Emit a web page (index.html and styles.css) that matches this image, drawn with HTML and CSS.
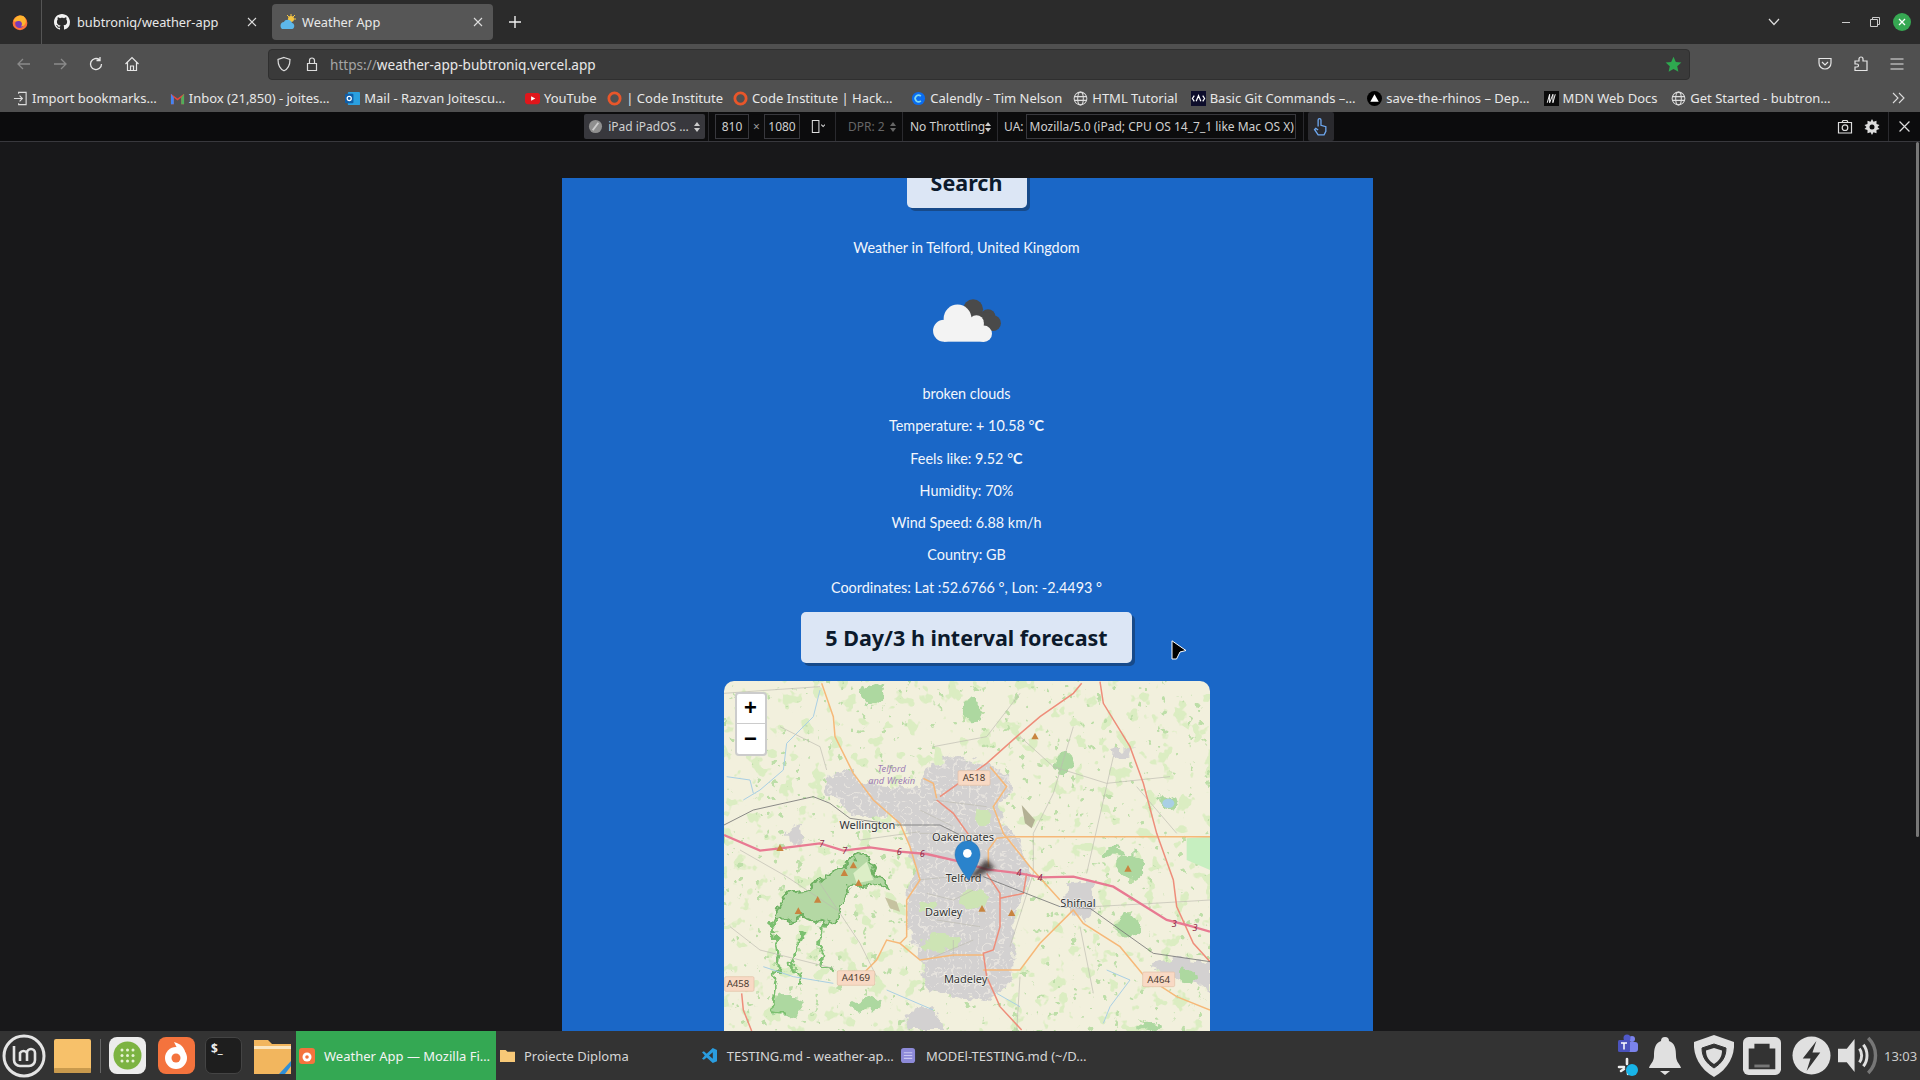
FILE: index.html
```html
<!DOCTYPE html>
<html lang="en">
<head>
    <meta charset="UTF-8">
    <title>Weather App</title>
    <link rel="stylesheet" href="styles.css">
</head>
<body>
    <div class="tabbar">
        <svg class="ff-logo" viewBox="0 0 20 20" width="16" height="17"><circle cx="10" cy="10.500" r="9.200" fill="#ff7139"/><circle cx="9.500" cy="11.500" r="5.500" fill="#7a3bb8"/><path d="M2 8C5 0 14 0 16 4 19 8 17 15 11 15 14 12 12 8 9 8 6 8 4 10 2 8z" fill="#ffb52e"/></svg>
        <div class="tab-sep"></div>
        <div class="tab">
            <svg viewBox="0 0 16 16" width="16" height="16"><path fill="#f2f2f2" d="M8 0C3.58 0 0 3.58 0 8c0 3.54 2.29 6.53 5.47 7.59.4.07.55-.17.55-.38 0-.19-.01-.82-.01-1.49-2.01.37-2.53-.49-2.69-.94-.09-.23-.48-.94-.82-1.13-.28-.15-.68-.52-.01-.53.63-.01 1.08.58 1.23.82.72 1.21 1.87.87 2.33.66.07-.52.28-.87.51-1.07-1.78-.2-3.64-.89-3.64-3.95 0-.87.31-1.59.82-2.15-.08-.2-.36-1.02.08-2.12 0 0 .67-.21 2.2.82.64-.18 1.32-.27 2-.27.68 0 1.36.09 2 .27 1.53-1.04 2.2-.82 2.2-.82.44 1.1.16 1.92.08 2.12.51.56.82 1.27.82 2.15 0 3.07-1.87 3.75-3.65 3.95.29.25.54.73.54 1.48 0 1.07-.01 1.93-.01 2.2 0 .21.15.46.55.38A8.013 8.013 0 0016 8c0-4.42-3.58-8-8-8z"/></svg>
            <span class="tab-title">bubtroniq/weather-app</span>
            <svg class="tab-close" viewBox="0 0 10 10" width="10" height="10"><path d="M1 1 9 9M9 1 1 9" stroke="#ddd" stroke-width="1.1"/></svg>
        </div>
        <div class="tab active">
            <svg viewBox="0 0 16 16" width="16" height="16"><g stroke="#f5c542" stroke-width="1"><path d="M11 0V3M16 5H13M7 1 9 3M15 1 13 3"/></g><circle cx="11" cy="5" r="3" fill="#f5c542"/><path d="M2 15C-1 12 1 8 4 8 5 5 11 5 12 9 15 9 15 15 12 15z" fill="#5db7ea"/></svg>
            <span class="tab-title">Weather App</span>
            <svg class="tab-close" viewBox="0 0 10 10" width="10" height="10"><path d="M1 1 9 9M9 1 1 9" stroke="#ddd" stroke-width="1.1"/></svg>
        </div>
        <svg class="new-tab" viewBox="0 0 12 12" width="12" height="12"><path d="M6 0V12M0 6H12" stroke="#f0f0f0" stroke-width="1.4"/></svg>
        <div class="spacer"></div>
        <svg class="all-tabs" viewBox="0 0 12 8" width="12" height="8"><path d="M1 1 6 6.5 11 1" stroke="#ddd" stroke-width="1.2" fill="none"/></svg>
        <div class="win-min"></div>
        <svg class="win-max" viewBox="0 0 10 10" width="10" height="10"><path d="M.5 2.5H7.5V9.5H.5zM2.5 2.5V.5H9.5V7.5H7.5" stroke="#ccc" fill="none"/></svg>
        <div class="win-close">
            <svg viewBox="0 0 8 8" width="8" height="8"><path d="M1 1 7 7M7 1 1 7" stroke="#fff" stroke-width="1.3"/></svg>
        </div>
    </div>

    <div class="navbar">
        <svg class="nav-icon back" viewBox="0 0 16 16" width="16" height="16"><path d="M14 8H2M7 3 2 8l5 5" stroke="#8a8a8a" stroke-width="1.3" fill="none"/></svg>
        <svg class="nav-icon" viewBox="0 0 16 16" width="16" height="16"><path d="M2 8H14M9 3l5 5-5 5" stroke="#8a8a8a" stroke-width="1.3" fill="none"/></svg>
        <svg class="nav-icon" viewBox="0 0 16 16" width="16" height="16"><path d="M13.5 8A5.5 5.5 0 1 1 11.5 3.8M12 1V4.5H8.5" stroke="#e6e6e6" stroke-width="1.3" fill="none"/></svg>
        <svg class="nav-icon" viewBox="0 0 16 16" width="16" height="16"><path d="M1.5 8 8 1.5 14.500 8M3.500 6.500V14.500H12.500V6.500M6.500 14.500V10H9.500V14.500" stroke="#e6e6e6" stroke-width="1.2" fill="none"/></svg>
        <div class="urlbar">
            <svg viewBox="0 0 16 16" width="16" height="16"><path d="M8 1.500 14 3.500C14 9 12 13 8 14.800 4 13 2 9 2 3.500z" stroke="#ddd" stroke-width="1.2" fill="none"/></svg>
            <svg viewBox="0 0 16 16" width="16" height="16"><path d="M3.500 7.500H12.500V14.500H3.500zM5.500 7.500V4.500A2.500 2.500 0 0 1 10.500 4.500V7.500" stroke="#ddd" stroke-width="1.2" fill="none"/></svg>
            <span class="url"><span class="url-dim">https://</span>weather-app-bubtroniq.vercel.app</span>
            <svg class="url-star" viewBox="0 0 16 16" width="17" height="17"><path d="M8 .8l2.200 4.800 5.200.6-3.900 3.500 1.100 5.200L8 12.200 3.400 14.900l1.100-5.200L.6 6.200l5.200-.6z" fill="#2ea84f"/></svg>
        </div>
        <svg class="nav-icon pocket" viewBox="0 0 16 16" width="16" height="16"><path d="M2 2.500H14V7A6 6 0 0 1 2 7zM5 6l3 3 3-3" stroke="#e6e6e6" stroke-width="1.2" fill="none"/></svg>
        <svg class="nav-icon" viewBox="0 0 16 16" width="16" height="16"><path d="M2 5H6V3A2 2 0 0 1 10 3V5H14V14.500H2V11H4A1.500 1.500 0 0 0 4 8H2z" stroke="#e6e6e6" stroke-width="1.2" fill="none"/></svg>
        <svg class="nav-icon nav-last" viewBox="0 0 16 16" width="16" height="16"><path d="M1.500 3H14.500M1.500 8H14.500M1.500 13H14.500" stroke="#e6e6e6" stroke-width="1.2"/></svg>
    </div>

    <div class="bookmarks">
        <div class="bm bm-import"><svg viewBox="0 0 16 16" width="15" height="15"><path d="M6 3V1.500H14V14.500H6V13M1 8H10M7 5l3 3-3 3" stroke="#ddd" stroke-width="1.2" fill="none"/></svg><span>Import bookmarks…</span></div>
        <div class="bm bm-inbox"><svg viewBox="0 0 16 16" width="15" height="15"><path d="M1 3V14H4V7L8 10 12 7V14H15V3L8 8z" fill="#e8453c"/><path d="M12 7 15 3V14H12z" fill="#4fae5b"/><path d="M1 3V14H4V7z" fill="#4285f4"/></svg><span>Inbox (21,850) - joites…</span></div>
        <div class="bm bm-mail"><svg viewBox="0 0 16 16" width="15" height="15"><rect x="3" y="1" width="13" height="14" rx="1" fill="#2aa0e0"/><rect x="0" y="3" width="9" height="10" rx="1" fill="#0f5ea8"/><circle cx="4.500" cy="8" r="2.200" fill="none" stroke="#fff" stroke-width="1.300"/></svg><span>Mail - Razvan Joitescu…</span></div>
        <div class="bm bm-yt"><svg viewBox="0 0 16 16" width="15" height="15"><rect x="0" y="2" width="16" height="12" rx="3" fill="#e0161b"/><path d="M6.500 5.500 11 8 6.500 10.500z" fill="#fff"/></svg><span>YouTube</span></div>
        <div class="bm bm-ci"><svg viewBox="0 0 16 16" width="15" height="15"><circle cx="8" cy="8" r="6" fill="none" stroke="#e8562a" stroke-width="3"/></svg><span>| Code Institute</span></div>
        <div class="bm bm-hack"><svg viewBox="0 0 16 16" width="15" height="15"><circle cx="8" cy="8" r="6" fill="none" stroke="#e8562a" stroke-width="3"/></svg><span>Code Institute | Hack…</span></div>
        <div class="bm bm-cal"><svg viewBox="0 0 16 16" width="15" height="15"><circle cx="8" cy="8" r="7" fill="#0a6cf0"/><path d="M10.500 5.500A3.500 3.500 0 1 0 10.500 10.500" stroke="#7fd8f0" stroke-width="1.800" fill="none"/></svg><span>Calendly - Tim Nelson</span></div>
        <div class="bm bm-html"><svg viewBox="0 0 16 16" width="15" height="15"><g fill="none" stroke="#ddd" stroke-width="1.100"><circle cx="8" cy="8" r="6.800"/><ellipse cx="8" cy="8" rx="3" ry="6.800"/><path d="M1.500 6H14.500M1.500 10H14.500"/></g></svg><span>HTML Tutorial</span></div>
        <div class="bm bm-git"><svg viewBox="0 0 16 16" width="15" height="15"><rect width="16" height="16" fill="#0d0d2b"/><path d="M5.500 11 8 5 10.500 11M3.500 5 1.500 8 3.500 11M12.500 5 14.500 8 12.500 11" stroke="#fff" stroke-width="1.300" fill="none"/></svg><span>Basic Git Commands –…</span></div>
        <div class="bm bm-rhino"><svg viewBox="0 0 16 16" width="15" height="15"><circle cx="8" cy="8" r="8" fill="#000"/><path d="M8 3.500 12.500 11.500H3.500z" fill="#fff"/></svg><span>save-the-rhinos – Dep…</span></div>
        <div class="bm bm-mdn"><svg viewBox="0 0 16 16" width="15" height="15"><rect width="16" height="16" fill="#0b0b0b"/><path d="M3.500 12.500 6 3.500V12.500L9.500 3.500V12.500L12 3.500" stroke="#fff" stroke-width="1" fill="none"/></svg><span>MDN Web Docs</span></div>
        <div class="bm bm-start"><svg viewBox="0 0 16 16" width="15" height="15"><g fill="none" stroke="#ddd" stroke-width="1.100"><circle cx="8" cy="8" r="6.800"/><ellipse cx="8" cy="8" rx="3" ry="6.800"/><path d="M1.500 6H14.500M1.500 10H14.500"/></g></svg><span>Get Started - bubtron…</span></div>
        <svg class="bm-more" viewBox="0 0 14 12" width="14" height="12"><path d="M1 1 6 6 1 11M7 1 12 6 7 11" stroke="#ddd" stroke-width="1.100" fill="none"/></svg>
    </div>

    <div class="rdm">
        <div class="rdm-device">
            <svg viewBox="0 0 16 16" width="15" height="15"><circle cx="8" cy="8" r="7" fill="#8f8f8f"/><path d="M5 12 11 4" stroke="#ccc" stroke-width="2"/></svg>
            <span>iPad iPadOS …</span>
            <svg viewBox="0 0 6 10" width="6" height="10"><path d="M3 0 6 4H0zM3 10 0 6H6z" fill="#ccc"/></svg>
        </div>
        <div class="rdm-sep sep-a"></div>
        <div class="rdm-input size-w">810</div>
        <span class="rdm-x">×</span>
        <div class="rdm-input size-h">1080</div>
        <svg class="rdm-rotate" viewBox="0 0 16 16" width="15" height="15"><path d="M2.500 1.500H9.500V14.500H2.500zM12 6l2 2 2-2" stroke="#ddd" stroke-width="1.100" fill="none"/></svg>
        <div class="rdm-sep sep-b"></div>
        <div class="rdm-dpr"><span>DPR: 2</span><svg viewBox="0 0 6 10" width="6" height="10"><path d="M3 0 6 4H0zM3 10 0 6H6z" fill="#666"/></svg></div>
        <div class="rdm-sep sep-c"></div>
        <div class="rdm-throttle"><span>No Throttling</span><svg viewBox="0 0 6 10" width="6" height="10"><path d="M3 0 6 4H0zM3 10 0 6H6z" fill="#ccc"/></svg></div>
        <div class="rdm-sep sep-d"></div>
        <span class="rdm-ua-label">UA:</span>
        <div class="rdm-input rdm-ua">Mozilla/5.0 (iPad; CPU OS 14_7_1 like Mac OS X) A</div>
        <div class="rdm-sep sep-e"></div>
        <div class="rdm-touch"><svg viewBox="0 0 16 16" width="19" height="19"><path d="M6 8V2.500A1.200 1.200 0 0 1 8.400 2.500V7L12.500 8.200V12L11 15H6L3 10.500 4 9.500 6 11" stroke="#6ea8f0" stroke-width="1.100" fill="none"/></svg></div>
        <div class="spacer"></div>
        <svg class="rdm-cam" viewBox="0 0 16 16" width="16" height="16"><path d="M1.500 3.500H14.500V14H1.500zM5 3.500 6 1.500H10L11 3.500" stroke="#ddd" stroke-width="1.200" fill="none"/><circle cx="8" cy="8.700" r="2.800" fill="none" stroke="#ddd" stroke-width="1.200"/></svg>
        <svg class="rdm-gear" viewBox="0 0 16 16" width="16" height="16"><path d="M8 0 9.500 2.800 12.500 1.800 12.500 5 15.500 6 13.500 8 15.500 10 12.500 11 12.500 14.200 9.500 13.200 8 16 6.500 13.200 3.500 14.200 3.500 11 .5 10 2.500 8 .5 6 3.500 5 3.500 1.800 6.500 2.800z" fill="#ddd"/><circle cx="8" cy="8" r="2.500" fill="#0c0c0d"/></svg>
        <div class="rdm-sep sep-f"></div>
        <svg class="rdm-close" viewBox="0 0 10 10" width="11" height="11"><path d="M.5 .5 9.500 9.500M9.500 .5 .5 9.500" stroke="#ddd" stroke-width="1.100"/></svg>
    </div>

    <div class="viewport">
        <main class="page">
            <button class="btn btn-search">Search</button>
            <p class="line city">Weather in Telford, United Kingdom</p>
            <svg class="weather-icon" viewBox="450 410 220 145" width="73" height="48">
                <g fill="#4a4a4a"><circle cx="580" cy="450" r="30"/><circle cx="625" cy="472" r="22"/><circle cx="640" cy="492" r="24"/><rect x="570" y="460" width="60" height="50"/></g>
                <g fill="#f3f3f3"><circle cx="533" cy="478" r="42"/><circle cx="590" cy="490" r="22"/><circle cx="492" cy="515" r="33"/><circle cx="612" cy="524" r="25"/><rect x="492" y="490" width="120" height="58"/></g>
            </svg>
            <p class="line desc">broken clouds</p>
            <p class="line">Temperature: + 10.58 °<b>C</b></p>
            <p class="line">Feels like: 9.52 °<b>C</b></p>
            <p class="line">Humidity: 70%</p>
            <p class="line">Wind Speed: 6.88 km/h</p>
            <p class="line">Country: GB</p>
            <p class="line">Coordinates: Lat :52.6766 °, Lon: -2.4493 °</p>
            <button class="btn btn-forecast">5 Day/3 h interval forecast</button>
            <div class="map">
                <svg class="map-tiles" viewBox="12 63 1458 1050" width="486" height="350">
                    <defs>
                        <filter id="rough" x="-5%" y="-5%" width="110%" height="110%">
                            <feTurbulence type="fractalNoise" baseFrequency="0.03" numOctaves="3" seed="4" result="n"/>
                            <feDisplacementMap in="SourceGraphic" in2="n" scale="46" xChannelSelector="R" yChannelSelector="G"/>
                            <feGaussianBlur stdDeviation="1.500"/>
                        </filter>
                        <filter id="fields" x="0" y="0" width="100%" height="100%" color-interpolation-filters="sRGB">
                            <feTurbulence type="fractalNoise" baseFrequency="0.022" numOctaves="3" seed="11"/>
                            <feColorMatrix values="0 0 0 0 .86  0 0 0 0 .93  0 0 0 0 .76  0 0 0 16 -9.700"/>
                        </filter>
                        <filter id="woods" x="0" y="0" width="100%" height="100%" color-interpolation-filters="sRGB">
                            <feTurbulence type="fractalNoise" baseFrequency="0.04" numOctaves="3" seed="23"/>
                            <feColorMatrix values="0 0 0 0 .74  0 0 0 0 .87  0 0 0 0 .66  0 0 0 18 -12.800"/>
                        </filter>
                        <filter id="streets" x="0" y="0" width="100%" height="100%" color-interpolation-filters="sRGB">
                            <feTurbulence type="turbulence" baseFrequency="0.04" numOctaves="2" seed="8"/>
                            <feColorMatrix values="0 0 0 0 .90  0 0 0 0 .89  0 0 0 0 .87  0 0 0 -14 2"/>
                        </filter>
                        <filter id="pin-blur" x="-30%" y="-30%" width="160%" height="160%"><feGaussianBlur stdDeviation="6"/></filter>
                        <clipPath id="town-clip"><path d="M320 345 400 330 425 372 600 385 620 325 690 290 800 310 865 345 880 395 835 425 860 500 900 540 925 620 920 700 880 760 880 960 800 1020 620 990 600 900 560 800 560 700 590 640 560 520 500 470 400 470 320 395z"/></clipPath>
                    </defs>
                    <rect x="12" y="63" width="1458" height="1050" fill="#f2f0dd"/>
                    <rect x="12" y="63" width="1458" height="1050" filter="url(#fields)"/>
                    <rect x="12" y="63" width="1458" height="1050" filter="url(#woods)"/>
                    <!-- built up areas -->
                    <g fill="#d3d1d1" filter="url(#rough)">
                        <path d="M320 345 400 330 425 372 600 385 620 325 690 290 800 310 865 345 880 395 835 425 860 500 900 540 925 620 920 700 880 760 880 960 800 1020 620 990 600 900 560 800 560 700 590 640 560 520 500 470 400 470 320 395z"/>
                        <path d="M1045 670 1110 665 1125 720 1120 760 1090 790 1060 760 1040 730z"/>
                        <path d="M205 505 240 495 245 545 210 545z"/>
                        <path d="M1180 270 1235 262 1225 290 1180 298z"/>
                        <path d="M560 1060 640 1040 680 1113 560 1113z"/>
                        <path d="M1290 925 1370 890 1470 905 1470 1000 1420 960 1340 940z"/>
                    </g>
                    <g clip-path="url(#town-clip)">
                        <rect x="300" y="280" width="640" height="760" filter="url(#streets)"/>
                        <g fill="#cde4b4" filter="url(#rough)">
                            <ellipse cx="760" cy="720" rx="40" ry="34"/><ellipse cx="660" cy="850" rx="60" ry="25"/>
                            <ellipse cx="790" cy="470" rx="24" ry="26"/><ellipse cx="620" cy="740" rx="26" ry="16"/>
                        </g>
                    </g>
                    <!-- woods -->
                    <g fill="#add8a0" filter="url(#rough)">
                        <path d="M415 100 490 65 480 110 440 140z"/><ellipse cx="755" cy="150" rx="30" ry="32"/>
                        <ellipse cx="1230" cy="615" rx="45" ry="38"/><ellipse cx="1030" cy="310" rx="26" ry="30"/>
                        <ellipse cx="1180" cy="575" rx="28" ry="12"/><ellipse cx="1345" cy="430" rx="28" ry="24"/>
                        <ellipse cx="1225" cy="795" rx="35" ry="30"/><ellipse cx="1400" cy="950" rx="25" ry="25"/>
                        <ellipse cx="205" cy="1040" rx="50" ry="32"/><ellipse cx="440" cy="1030" rx="45" ry="22"/>
                        <ellipse cx="1290" cy="1100" rx="30" ry="14"/>
                    </g>
                    <path d="M190 700 260 692 330 640 430 575 470 640 510 690 440 680 390 680 350 770 310 800 240 770 160 790z" fill="#b4d8a4" stroke="#6fb264" stroke-width="6" filter="url(#rough)"/>
                    <path d="M400 640 440 605 460 660 410 670z" fill="#dceec6"/>
                    <path d="M160 790 175 900 155 1050 200 1060M310 800 300 900 350 935M250 820 210 900 250 980" fill="none" stroke="#7cc070" stroke-width="8" filter="url(#rough)"/>
                    <path d="M1470 530V630L1400 600V535z" fill="#c6efc0"/>
                    <path d="M905 435 945 480 935 505 915 490z" fill="#b3b094"/>
                    <path d="M495 712 530 725 540 755 510 745z" fill="#c6c2a0"/>
                    <!-- water and small lanes -->
                    <g fill="none" stroke="#a9cfe4" stroke-width="3">
                        <path d="M300 90 280 170 200 250 190 330 120 390 70 420"/>
                        <path d="M20 350 90 360 100 400"/>
                        <path d="M130 920 220 950 340 970"/>
                        <path d="M500 990 640 1050M830 1000 900 1040"/>
                        <path d="M1160 930 1230 960 1170 1040 1150 1090"/>
                    </g>
                    <ellipse cx="1345" cy="430" rx="18" ry="14" fill="#a9cfe4"/>
                    <g fill="none" stroke="#bdbbb0" stroke-width="2">
                        <path d="M12 100 150 90 300 80M180 200 300 260 320 330M640 260 800 230 900 100M900 230 1000 320 1160 370 1350 350"/>
                        <path d="M1060 200 1000 400 940 520 940 640 870 860M1180 290 1100 640M1250 380 1370 520"/>
                        <path d="M300 670 420 850 470 950M60 570 200 650 350 750M30 800 120 870 340 925"/>
                        <path d="M1120 740 1300 730 1470 720M1080 800 1120 1000M900 950 890 1113M600 520 850 520M420 540 600 515"/>
                        <path d="M590 660 700 650M620 700 700 720 760 690M650 780 780 800M620 900 760 840M700 840 700 890M640 420 800 440M600 450 700 500"/>
                    </g>
                    <!-- main roads -->
                    <g fill="none" stroke="#f6b878" stroke-width="4.500">
                        <path d="M305 70 340 170 345 230 400 340 460 420 540 490 570 560 600 660 560 720 560 830 540 850 600 900 700 885 790 885"/>
                        <path d="M810 320 860 380 820 440 850 520 890 570 930 620 1020 720"/>
                        <path d="M830 535 870 530H1470"/>
                        <path d="M830 535 805 570 805 620"/>
                        <path d="M610 355 640 370 650 415"/>
                        <path d="M540 850 500 840 470 900 420 950"/>
                        <path d="M790 930H900L960 850 1060 750 1090 790 1200 860 1270 945 1370 1010 1470 1050"/>
                    </g>
                    <g fill="none" stroke="#ee8d7a" stroke-width="4.500">
                        <path d="M1140 65 1150 130 1230 260 1270 370 1310 520 1360 660 1370 740 1420 850 1470 905"/>
                        <path d="M1085 70 1060 100 960 170 890 230 800 310 660 410"/>
                        <path d="M650 420 700 460 750 530"/>
                        <path d="M800 640 840 700 840 800 820 870 790 880 800 950 840 1040 905 1110"/>
                        <path d="M840 715 910 700 920 640"/>
                        <path d="M65 1000 70 1050 95 1113"/>
                    </g>
                    <path d="M12 525 120 572 180 565 300 550 370 572 450 562 540 575 620 582 720 605 800 628 900 640 960 652 1060 650 1180 680 1260 730 1340 780 1400 795 1470 815" fill="none" stroke="#e87a92" stroke-width="7"/>
                    <!-- railways -->
                    <g fill="none" stroke="#767676" stroke-width="2.500">
                        <path d="M12 495 100 450 280 410 330 430 390 475 530 495 660 495 720 525"/>
                        <path d="M790 650 1020 740 1110 745 1300 880 1470 905"/>
                    </g>
                    <!-- peaks -->
                    <g fill="#c8843f">
                        <path d="M945 218 956 238H934z"/><path d="M180 553 191 573H169z"/><path d="M400 605 411 625H389z"/>
                        <path d="M373 628 384 648H362z"/><path d="M416 658 427 678H405z"/><path d="M293 708 304 728H282z"/>
                        <path d="M235 742 246 762H224z"/><path d="M786 735 797 755H775z"/><path d="M875 748 886 768H864z"/>
                        <path d="M1224 615 1235 635H1213z"/>
                    </g>
                    <!-- road shields -->
                    <g fill="#f8d9c4" stroke="#e3bfa6" stroke-width="2">
                        <rect x="714" y="332" width="96" height="44" rx="4"/>
                        <rect x="352" y="932" width="112" height="44" rx="4"/>
                        <rect x="14" y="950" width="88" height="44" rx="4"/>
                        <rect x="1268" y="936" width="96" height="44" rx="4"/>
                    </g>
                    <g class="map-shield">
                        <text x="762" y="364">A518</text>
                        <text x="408" y="964">A4169</text>
                        <text x="54" y="982">A458</text>
                        <text x="1316" y="968">A464</text>
                    </g>
                    <g class="map-junction">
                        <text x="305" y="562">7</text><text x="374" y="582">7</text>
                        <text x="538" y="586">6</text><text x="607" y="590">6</text>
                        <text x="897" y="648">4</text><text x="960" y="662">4</text>
                        <text x="1363" y="800">3</text><text x="1425" y="812">3</text>
                    </g>
                    <g class="map-region">
                        <text x="515" y="336">Telford</text>
                        <text x="515" y="371">and Wrekin</text>
                    </g>
                    <g class="map-town">
                        <text x="442" y="508">Wellington</text>
                        <text x="729" y="543">Oakengates</text>
                        <text x="731" y="666">Telford</text>
                        <text x="671" y="769">Dawley</text>
                        <text x="1074" y="742">Shifnal</text>
                        <text x="737" y="968">Madeley</text>
                    </g>
                    <!-- marker -->
                    <path d="M745 652 800 598 825 625 770 650z" fill="#2b2420" opacity=".8" filter="url(#pin-blur)"/>
                    <path d="M742 543C720 543 705 562 705 585 705 602 730 640 745 660 760 640 780 602 780 585 780 562 765 543 742 543z" fill="#2a83cc" stroke="#1f6cae" stroke-width="1.500"/>
                    <circle cx="742" cy="580" r="13" fill="#fff"/>
                </svg>
                <div class="zoom-ctl">
                    <div class="zoom-btn zoom-in">+</div>
                    <div class="zoom-btn">−</div>
                </div>
            </div>
        </main>
        <svg class="cursor" viewBox="0 0 16 20" width="16" height="20"><path d="M1 .8 15 10.500 9 12 5.500 19 1 19z" fill="#000" stroke="#fff" stroke-width="1"/></svg>
        <div class="scroll-thumb"></div>
    </div>

    <div class="taskbar">
        <svg class="launcher mint" viewBox="0 0 44 44" width="44" height="44"><circle cx="22" cy="22" r="20" fill="#333" stroke="#e4e4e4" stroke-width="3"/><path d="M12 12V26A6 6 0 0 0 18 32H27A6 6 0 0 0 33 26V19A4 4 0 0 0 25 19V27M25 19A4 4 0 0 0 18 19V27" fill="none" stroke="#e4e4e4" stroke-width="2.600"/></svg>
        <svg class="launcher" viewBox="0 0 37 34" width="37" height="34"><rect width="37" height="34" rx="2" fill="#f7c16a"/><rect y="29" width="37" height="5" rx="1" fill="#c99a4d"/></svg>
        <div class="launch-sep"></div>
        <svg class="launcher launch-apps" viewBox="0 0 37 37" width="37" height="37"><rect width="37" height="37" rx="8" fill="#ececec"/><circle cx="18.500" cy="18.500" r="14" fill="#7cb342"/><g fill="#e7f3d5"><circle cx="13" cy="13" r="1.500"/><circle cx="18.500" cy="13" r="1.500"/><circle cx="24" cy="13" r="1.500"/><circle cx="13" cy="18.500" r="1.500"/><circle cx="18.500" cy="18.500" r="1.500"/><circle cx="24" cy="18.500" r="1.500"/><circle cx="13" cy="24" r="1.500"/><circle cx="18.500" cy="24" r="1.500"/><circle cx="24" cy="24" r="1.500"/></g></svg>
        <svg class="launcher launch-ff" viewBox="0 0 37 37" width="37" height="37"><rect width="37" height="37" rx="8" fill="#f4733d"/><circle cx="18" cy="21" r="11" fill="#fff"/><circle cx="18" cy="21" r="4.500" fill="#f4733d"/><path d="M16 5C24 7 29 13 27 21L21 15z" fill="#fff"/></svg>
        <div class="launcher term"><span>$_</span></div>
        <svg class="launcher launch-files" viewBox="0 0 37 37" width="37" height="37"><path d="M0 3H14L18 7H37V37H0z" fill="#f2b65e"/><rect y="9" width="37" height="3" fill="#fbe6c0"/><path d="M25 37 37 24V29L31 37z" fill="#2f8fd8"/></svg>
        <div class="task task-active">
            <svg viewBox="0 0 16 16" width="16" height="16"><rect width="16" height="16" rx="3" fill="#f4733d"/><circle cx="8" cy="9" r="4.500" fill="#fff"/><circle cx="8" cy="9" r="1.800" fill="#f4733d"/></svg>
            <span>Weather App — Mozilla Fi…</span>
        </div>
        <div class="task task-folder">
            <svg viewBox="0 0 16 16" width="15" height="15"><path d="M0 2H6L8 4H16V15H0z" fill="#f7c877"/></svg>
            <span>Proiecte Diploma</span>
        </div>
        <div class="task task-code">
            <svg viewBox="0 0 16 16" width="15" height="15"><path d="M11.500 0 16 2V14L11.500 16 5 10 2 12.500 0 11.500 3 8 0 4.500 2 3.500 5 6zM11.500 4.500 7.500 8 11.500 11.500z" fill="#2a9de0"/></svg>
            <span>TESTING.md - weather-ap…</span>
        </div>
        <div class="task task-notes">
            <svg viewBox="0 0 16 16" width="15" height="15"><rect width="15" height="16" rx="3" fill="#8d8ad8"/><path d="M3 5H12M3 8H12M3 11H12" stroke="#c9c7f0" stroke-width="1.200"/></svg>
            <span>MODEl-TESTING.md (~/D…</span>
        </div>
        <div class="spacer"></div>
        <div class="tray-stack">
            <svg viewBox="0 0 22 20" width="22" height="20"><circle cx="15" cy="5" r="3" fill="#7b83eb"/><rect x="10" y="8" width="11" height="10" rx="3" fill="#7b83eb"/><circle cx="10" cy="4" r="3.500" fill="#5059c9"/><rect x="1" y="6" width="12" height="12" rx="1.500" fill="#4b53bc"/><path d="M4 9H10M7 9V15.500" stroke="#fff" stroke-width="1.500"/></svg>
            <svg viewBox="0 0 22 20" width="22" height="20"><path d="M10 2V7M2 10H7M11 17V13M4 14 7 12" stroke="#eee" stroke-width="2.600" stroke-linecap="round"/><circle cx="15" cy="13" r="6" fill="#18b4e8"/></svg>
        </div>
        <svg class="tray-bell" viewBox="0 0 34 40" width="34" height="40"><path d="M17 1A4 4 0 0 1 21 5C27 7 28 13 28 20 28 26 32 28 33 32H1C2 28 6 26 6 20 6 13 7 7 13 5A4 4 0 0 1 17 1z" fill="#e0e0e0"/><path d="M12 35H22L17 39z" fill="#e0e0e0"/></svg>
        <svg class="tray-shield" viewBox="0 0 44 44" width="44" height="44"><path d="M22 1 42 8C43 22 36 35 22 43 8 35 1 22 2 8z" fill="#e0e0e0"/><path d="M22 10 34 14C34 23 30 29 22 34 14 29 10 23 10 14z" fill="#333" stroke="#333"/><path d="M22 14 30 16.500C30 23 27 27 22 30 17 27 14 23 14 16.500z" fill="#e0e0e0"/></svg>
        <svg class="tray-eth" viewBox="0 0 40 40" width="38" height="38"><rect width="40" height="40" rx="6" fill="#e0e0e0"/><path d="M6 12H12V7H28V12H34V34H6z" fill="#333"/><rect x="12" y="29" width="16" height="3" fill="#777"/></svg>
        <svg class="tray-bolt" viewBox="0 0 40 40" width="39" height="39"><circle cx="20" cy="20" r="19.500" fill="#e0e0e0"/><path d="M25 5 11 23H19L15 36 29 17H21z" fill="#333"/></svg>
        <svg class="tray-vol" viewBox="0 0 42 40" width="41" height="39"><path d="M1 13H10L18 3V37L10 27H1z" fill="#e0e0e0"/><path d="M23 13C26 17 26 23 23 27M27 9C32 15 32 25 27 31" stroke="#e0e0e0" stroke-width="3" fill="none"/><path d="M32 2C42 12 42 28 32 38" stroke="#777" stroke-width="3.500" fill="none"/></svg>
        <span class="clock">13:03</span>
    </div>
</body>
</html>
```

FILE: styles.css
```css
* {
    box-sizing: border-box;
}
html, body {
    height: 100%;
}
body {
    margin: 0;
    display: flex;
    flex-direction: column;
    overflow: hidden;
    background: #18181a;
    font-family: "Noto Sans", "Open Sans", sans-serif;
    font-size: 13px;
    color: #e8e8e8;
}
svg {
    flex: none;
    display: block;
}
.spacer {
    flex: 1;
}

/* tabs */
.tabbar {
    height: 44px;
    flex: none;
    display: flex;
    align-items: center;
    background: #2b2b2b;
}
.ff-logo {
    margin-left: 12px;
}
.tab-sep {
    width: 1px;
    height: 44px;
    margin-left: 13px;
    background: #555;
}
.tab {
    width: 221px;
    height: 36px;
    padding-left: 8px;
    margin-left: 4px;
    display: flex;
    align-items: center;
    gap: 7px;
    border-radius: 4px;
}
.tab.active {
    margin-left: 5px;
    gap: 6px;
    background: #565656;
}
.tab-title {
    flex: 1;
    font-size: 12.8px;
    white-space: nowrap;
}
.tab-close {
    margin-right: 10px;
}
.new-tab {
    margin-left: 16px;
}
.all-tabs {
    margin-right: 62px;
}
.win-min {
    width: 8px;
    height: 1px;
    margin-right: 20px;
    background: #ccc;
}
.win-max {
    margin-right: 13px;
}
.win-close {
    width: 18px;
    height: 18px;
    margin-right: 9px;
    display: flex;
    align-items: center;
    justify-content: center;
    border-radius: 50%;
    background: #36a852;
}

/* nav */
.navbar {
    height: 40px;
    flex: none;
    display: flex;
    align-items: center;
    background: #505050;
}
.nav-icon {
    margin-right: 20px;
}
.nav-last {
    margin-right: 0;
}
.back {
    margin-left: 16px;
}
.urlbar {
    flex: none;
    width: 1422px;
    height: 31px;
    margin-left: 108px;
    padding: 0 7px;
    display: flex;
    align-items: center;
    gap: 12px;
    background: #3a3a3a;
    border: 1px solid #2f2f2f;
    border-radius: 4px;
}
.url {
    flex: 1;
    margin-left: -2px;
    font-size: 13.6px;
}
.url-dim {
    color: #a5a5a5;
}
.pocket {
    margin-left: 127px;
}

/* bookmarks */
.bookmarks {
    height: 28px;
    flex: none;
    display: flex;
    align-items: center;
    padding-left: 13px;
    background: #505050;
}
.bm {
    flex: none;
    display: flex;
    align-items: center;
    gap: 4px;
    white-space: nowrap;
}
.bm-inbox { margin-left: 13px; }
.bm-mail { margin-left: 15.6px; }
.bm-yt { margin-left: 19.6px; }
.bm-ci { margin-left: 10.8px; }
.bm-hack { margin-left: 9.8px; }
.bm-cal { margin-left: 18.8px; }
.bm-html { margin-left: 11px; }
.bm-git { margin-left: 13px; }
.bm-rhino { margin-left: 11.7px; }
.bm-mdn { margin-left: 14.2px; }
.bm-start { margin-left: 13.8px; }
.bm-more {
    margin-left: auto;
    margin-right: 14px;
}

/* responsive design toolbar */
.rdm {
    height: 30px;
    flex: none;
    display: flex;
    align-items: center;
    background: #0c0c0d;
    border-bottom: 1px solid #38383d;
    font-size: 12px;
    color: #d0d0d0;
    white-space: nowrap;
}
.rdm-device {
    width: 121px;
    height: 25px;
    margin-left: 584px;
    padding: 0 5px 0 4px;
    display: flex;
    align-items: center;
    justify-content: space-between;
    background: #38383d;
    border-radius: 2px;
}
.rdm-sep {
    width: 1px;
    height: 29px;
    background: #2a2a2e;
}
.sep-a { margin-left: 3px; }
.rdm-input {
    height: 25px;
    display: flex;
    align-items: center;
    justify-content: center;
    border: 1px solid #38383d;
}
.size-w {
    width: 34px;
    margin-left: 6px;
}
.rdm-x {
    width: 15px;
    text-align: center;
    color: #999;
}
.size-h {
    width: 36px;
}
.rdm-rotate {
    margin-left: 10px;
}
.sep-b { margin-left: 10px; }
.rdm-dpr {
    width: 66px;
    padding: 0 6px 0 12px;
    display: flex;
    align-items: center;
    justify-content: space-between;
    color: #666;
}
.rdm-throttle {
    width: 94px;
    padding: 0 6px 0 7px;
    display: flex;
    align-items: center;
    justify-content: space-between;
}
.rdm-ua-label {
    margin-left: 6px;
}
.rdm-ua {
    width: 270px;
    margin-left: 2px;
    padding-left: 3px;
    justify-content: flex-start;
    overflow: hidden;
}
.sep-e { margin-left: 7px; }
.rdm-touch {
    width: 26px;
    height: 29px;
    margin-left: 4px;
    display: flex;
    align-items: center;
    justify-content: center;
    background: #2a2a2e;
    border-radius: 2px;
}
.rdm-cam {
    margin-right: 11px;
}
.rdm-gear {
    margin-right: 8px;
}
.rdm-close {
    margin: 0 10px;
}

/* emulated page */
.viewport {
    flex: 1;
    min-height: 0;
    position: relative;
    padding: 36px 0 0 562px;
    overflow: hidden;
    background: #18181a;
}
.page {
    width: 811px;
    height: 100%;
    padding-right: 2px;
    display: flex;
    flex-direction: column;
    align-items: center;
    overflow: hidden;
    background: #1a67c7;
    color: #f2f6fc;
    font-family: "Lato", sans-serif;
    font-size: 14.4px;
}
.btn {
    flex: none;
    height: 51px;
    border: 0;
    border-radius: 5px;
    background: #dce6f5;
    color: #0c1a2c;
    font-family: "Noto Sans", sans-serif;
    font-size: 21.5px;
    font-weight: 700;
    box-shadow: 3px 3px 0 #174a8a;
}
.btn-search {
    width: 120px;
    margin-top: -21px;
}
.btn-forecast {
    width: 331px;
    margin-top: 14px;
}
.line {
    margin: 12.25px 0 0;
    height: 20px;
    line-height: 20px;
}
.line.city {
    margin-top: 30px;
}
.weather-icon {
    margin-top: 38px;
}
.line.desc {
    margin-top: 40px;
}
.map {
    flex: none;
    width: 486px;
    height: 350px;
    margin-top: 18px;
    position: relative;
    overflow: hidden;
    border-radius: 10px 10px 0 0;
}
.map-tiles text {
    font-family: "Noto Sans", "Open Sans", sans-serif;
}
.map-town text {
    font-size: 33px;
    text-anchor: middle;
    fill: #333;
    paint-order: stroke;
    stroke: #f2f2ee;
    stroke-width: 4px;
}
.map-shield text {
    font-size: 29px;
    text-anchor: middle;
    fill: #4a3a30;
}
.map-junction text {
    font-size: 27px;
    font-style: italic;
    text-anchor: middle;
    fill: #8a2a48;
}
.map-region text {
    font-size: 28px;
    font-style: italic;
    text-anchor: middle;
    fill: #9f7fb5;
}
.zoom-ctl {
    position: absolute;
    left: 11px;
    top: 11px;
    width: 32px;
    border: 2px solid rgba(0, 0, 0, 0.2);
    border-radius: 4px;
    background: #fff;
}
.zoom-btn {
    height: 30px;
    display: flex;
    align-items: center;
    justify-content: center;
    font-family: "Liberation Sans", sans-serif;
    font-size: 22px;
    font-weight: 700;
    color: #000;
}
.zoom-in {
    border-bottom: 1px solid #ccc;
}
.cursor {
    position: absolute;
    left: 1171px;
    top: 498px;
}
.scroll-thumb {
    position: absolute;
    right: 1px;
    top: 0;
    width: 3px;
    height: 695px;
    background: #777;
    border-radius: 2px;
}

/* panel */
.taskbar {
    height: 49px;
    flex: none;
    display: flex;
    align-items: center;
    background: #333;
    font-size: 13px;
    color: #d6d6d6;
    white-space: nowrap;
}
.launcher {
    margin-left: 8px;
}
.mint {
    margin-left: 2px;
}
.launch-sep {
    width: 1px;
    height: 34px;
    margin-left: 9px;
    background: #666;
}
.launch-ff {
    margin-left: 12px;
}
.term {
    width: 37px;
    height: 37px;
    margin-left: 10px;
    padding: 2px 0 0 5px;
    border-radius: 7px;
    background: #1e1e1e;
    border: 1px solid #444;
    font-size: 12px;
    font-weight: 700;
    color: #eee;
}
.launch-files {
    margin-left: 12px;
}
.task {
    height: 49px;
    display: flex;
    align-items: center;
}
.task-active {
    width: 200px;
    margin-left: 5px;
    padding-left: 3px;
    gap: 9px;
    background: #34a853;
    color: #f4f4f4;
}
.task-folder {
    margin-left: 4px;
    gap: 9px;
}
.task-code {
    margin-left: 73px;
    gap: 10px;
}
.task-notes {
    margin-left: 7px;
    gap: 10px;
}
.tray-stack {
    margin-right: 9px;
    display: flex;
    flex-direction: column;
    gap: 3px;
}
.tray-bell { margin-right: 10px; }
.tray-shield { margin-right: 7px; }
.tray-eth { margin-right: 11px; }
.tray-bolt { margin-right: 6px; }
.tray-vol { margin-right: 6px; }
.clock {
    width: 34px;
    margin-right: 2px;
    font-size: 13px;
    color: #ccc;
}
```
